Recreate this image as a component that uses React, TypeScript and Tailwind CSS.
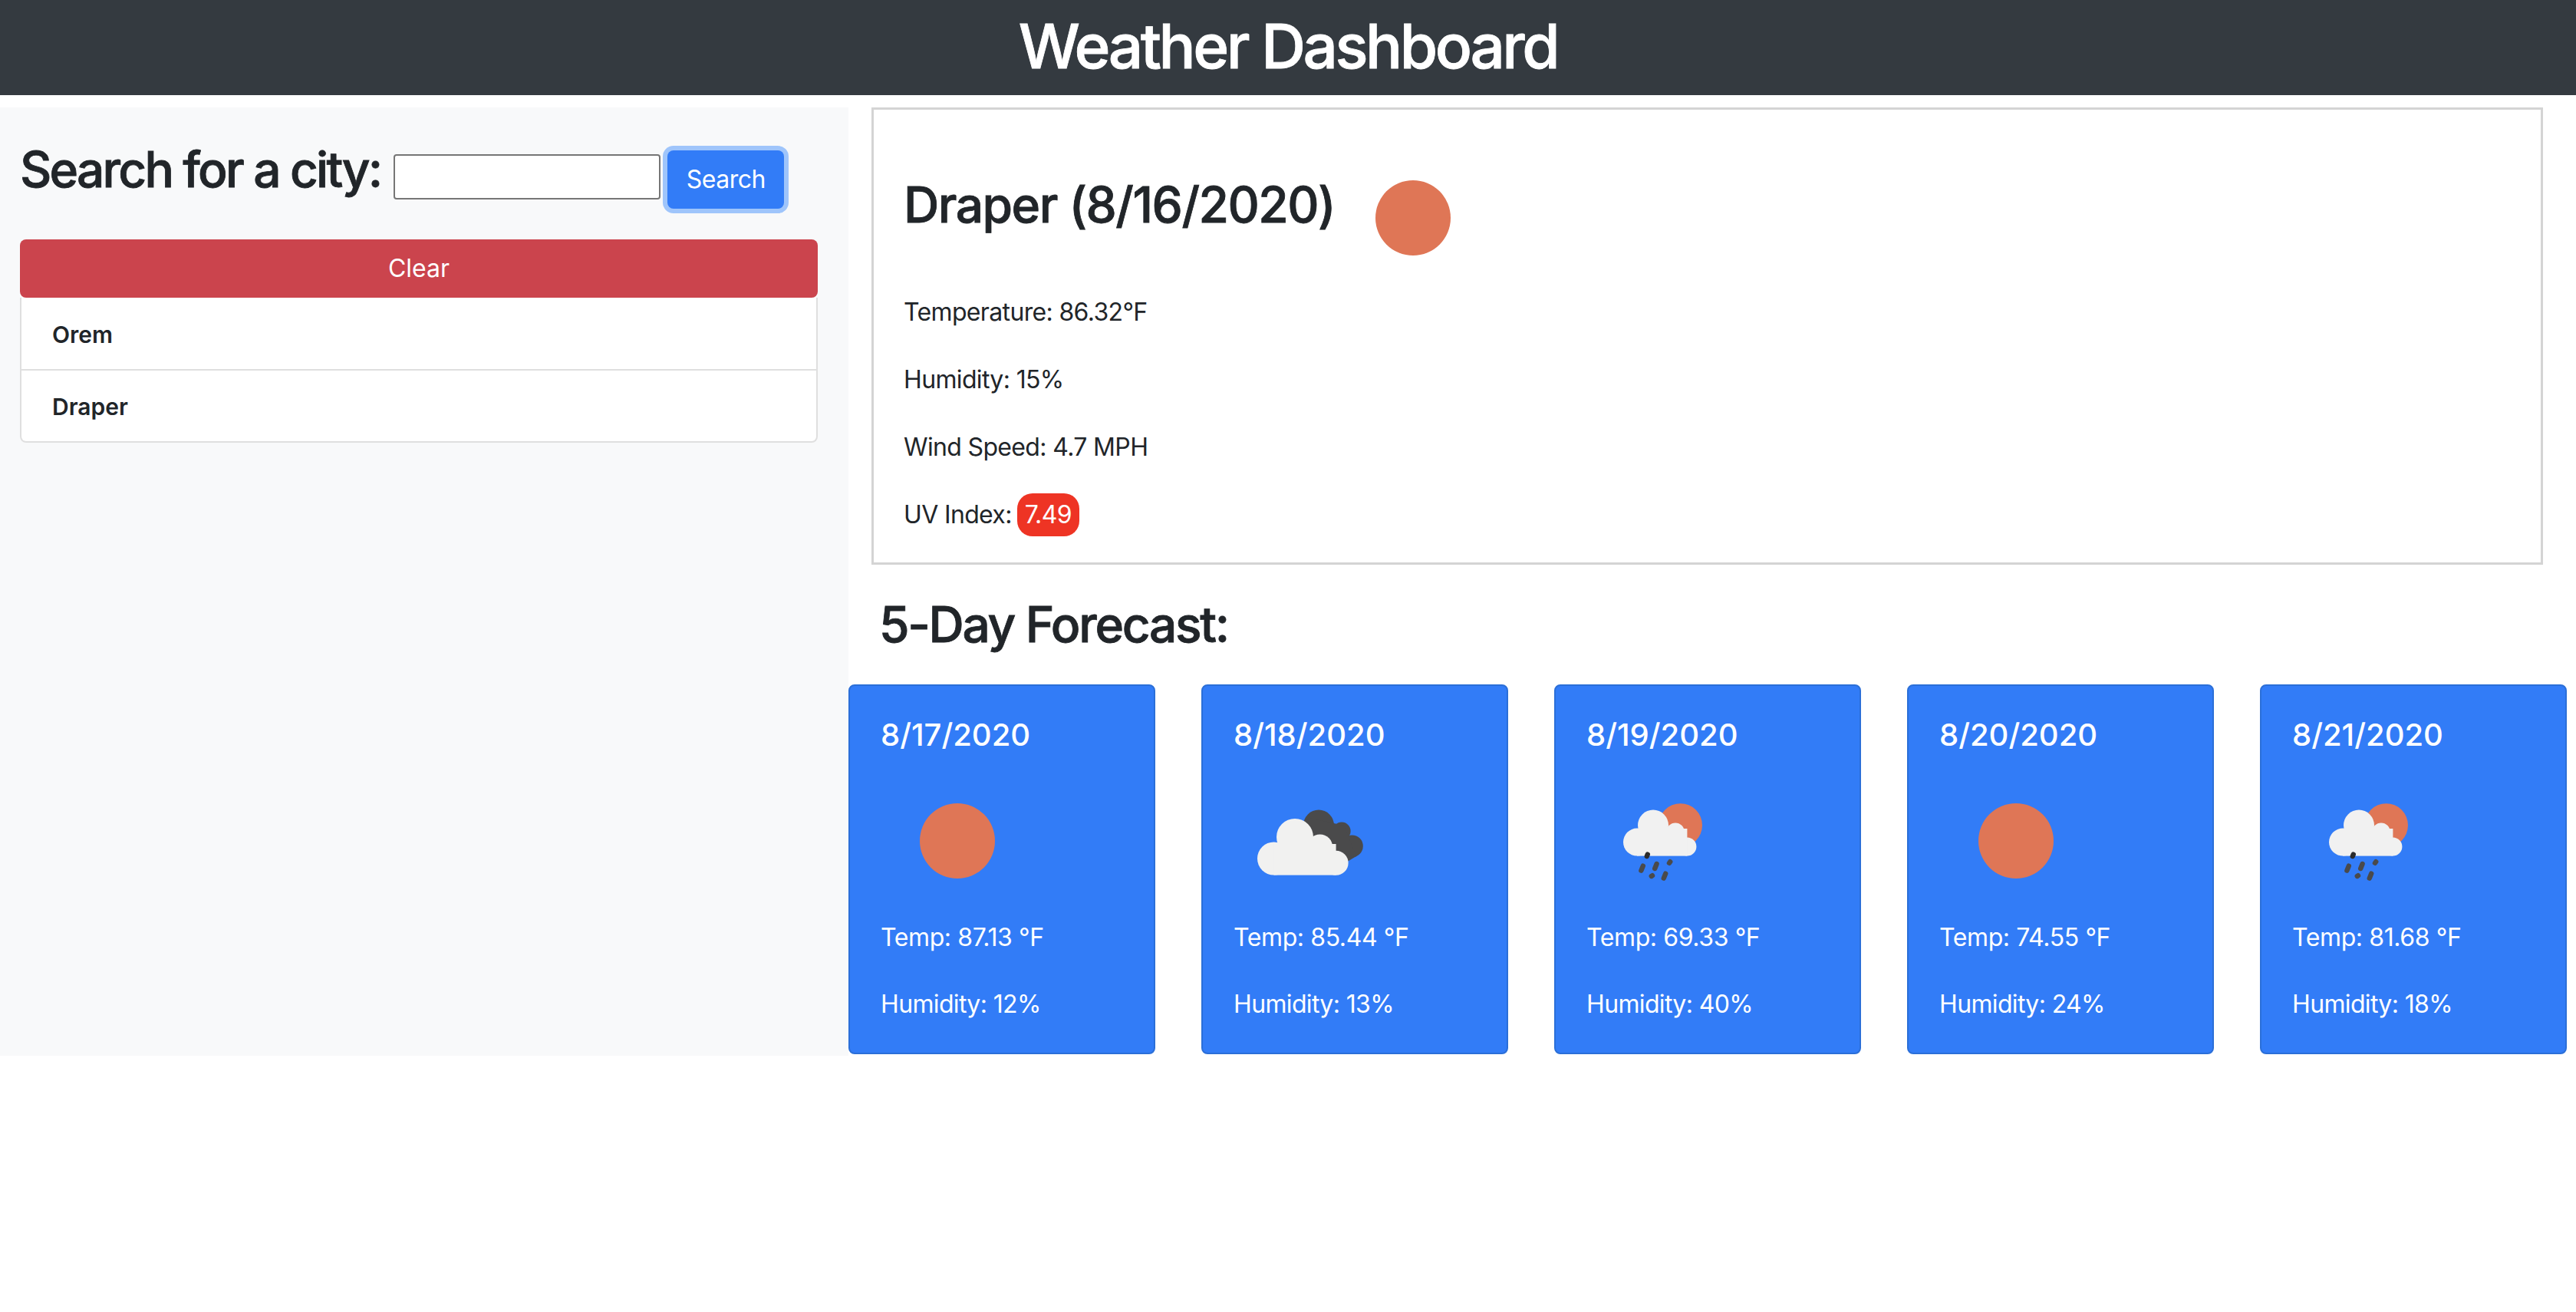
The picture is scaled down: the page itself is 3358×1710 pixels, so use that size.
import React from 'react';

type IconKind = 'sun' | 'clouds' | 'rain';

const FORECAST: { date: string; temp: string; humidity: string; icon: IconKind }[] = [
  { date: '8/17/2020', temp: '87.13', humidity: '12', icon: 'sun' },
  { date: '8/18/2020', temp: '85.44', humidity: '13', icon: 'clouds' },
  { date: '8/19/2020', temp: '69.33', humidity: '40', icon: 'rain' },
  { date: '8/20/2020', temp: '74.55', humidity: '24', icon: 'sun' },
  { date: '8/21/2020', temp: '81.68', humidity: '18', icon: 'rain' },
];

const WeatherIcon = ({ kind }: { kind: IconKind }) => {
  if (kind === 'sun') {
    return (
      <svg viewBox="0 0 100 100" className="w-[200px] h-[200px] block">
        <circle cx="50" cy="50" r="24.5" fill="#df7656" />
      </svg>
    );
  }

  if (kind === 'clouds') {
    return (
      <svg viewBox="0 0 100 100" className="w-[200px] h-[200px] block">
        <g fill="#4a4a4b">
          <circle cx="55.5" cy="39.8" r="10" />
          <circle cx="70.5" cy="43.6" r="5.8" />
          <circle cx="77.2" cy="53.4" r="7.2" />
          <path d="M50 35 L72 40 L80 60 L70 66 L50 50 Z" />
        </g>
        <g fill="#f1f1f0">
          <circle cx="40" cy="47.5" r="12" />
          <circle cx="26.3" cy="61.5" r="10.8" />
          <circle cx="66.8" cy="64.4" r="8" />
          <circle cx="56.3" cy="54" r="8.3" />
          <rect x="26.3" y="52" width="40.5" height="20.3" />
        </g>
      </svg>
    );
  }

  return (
    <svg viewBox="0 0 100 100" className="w-[200px] h-[200px] block">
      <circle cx="61.3" cy="39.8" r="14.2" fill="#df7656" />
      <g fill="#f1f1f1">
        <circle cx="43.5" cy="39.8" r="10" />
        <circle cx="33" cy="50.8" r="9" />
        <circle cx="65.7" cy="53.8" r="6" />
        <circle cx="58" cy="44" r="5.8" />
        <rect x="33" y="42" width="32.7" height="17.8" />
      </g>
      <g stroke="#4a4a4b" strokeWidth="3.2" strokeLinecap="round">
        <line x1="39.9" y1="58.8" x2="39.4" y2="60" stroke="#2b2b2b" />
        <line x1="36.9" y1="66.3" x2="35.7" y2="69.3" />
        <line x1="45.8" y1="65" x2="44.6" y2="68" />
        <line x1="54.6" y1="63.6" x2="54" y2="64.4" />
        <line x1="43" y1="72.6" x2="42.4" y2="73" />
        <line x1="51.6" y1="71.3" x2="50.4" y2="74.3" />
      </g>
    </svg>
  );
};

const ForecastCard = ({ date, temp, humidity, icon }: (typeof FORECAST)[number]) => (
  <div className="w-[400px] h-[482px] shrink-0 bg-[#327cf7] border-2 border-[#2b6fd8] rounded-lg pl-[40px] pt-[36px] text-white">
    <h5 className="text-[40px] leading-[56px] font-medium">{date}</h5>
    <div className="mt-[10px] mb-[2px]">
      <WeatherIcon kind={icon} />
    </div>
    <p className="text-[32px] leading-[48px] tracking-[-0.4px]">Temp: {temp} °F</p>
    <p className="text-[32px] leading-[48px] tracking-[-0.65px] mt-[39px]">Humidity: {humidity}%</p>
  </div>
);

export default function App() {
  return (
    <div className="font-['Inter','Liberation_Sans',sans-serif] text-[#212529] bg-white min-h-[1710px]">
      <header className="h-[124px] bg-[#343a40] flex items-center justify-center">
        <h1 className="text-[80px] leading-[116px] font-medium [-webkit-text-stroke:0.8px] tracking-[-3.45px] text-white mt-[-4px]">Weather Dashboard</h1>
      </header>

      <div className="flex mt-4">
        <aside className="w-[1106px] shrink-0 bg-[#f8f9fa] px-[26px] pt-[56px]">
          <div className="flex items-center h-[76px]">
            <h3 className="text-[64px] leading-[76px] font-medium [-webkit-text-stroke:0.8px] tracking-[-2.8px] mt-[-26px]">Search for a city:</h3>
            <input
              type="text"
              className="ml-[17px] mt-[-8px] w-[348px] h-[59px] bg-white border-2 border-[#767676] rounded-[4px]"
            />
            <button className="ml-[9px] w-[152px] h-[76px] bg-[#327cf7] rounded-lg text-white text-[32px] tracking-[-0.5px] ring-[6px] ring-[#9fc5fb]">
              Search
            </button>
          </div>

          <div className="w-[1040px] mt-[40px]">
            <button className="w-full h-[76px] bg-[#cb444d] rounded-lg text-white text-[32px]">Clear</button>
            <ul className="border-2 border-t-0 border-[#dfdfdf] rounded-b-lg bg-white">
              <li className="h-[95px] pl-[40px] pt-[4px] flex items-center text-[30px] font-semibold border-b-2 border-[#dfdfdf]">Orem</li>
              <li className="h-[92px] pl-[40px] pt-[2px] flex items-center text-[30px] font-semibold">Draper</li>
            </ul>
          </div>
        </aside>

        <main className="flex-1 min-w-0">
          <section className="ml-[30px] mr-[43px] h-[596px] border-[3px] border-[#d4d4d4] pl-[39px] pt-[80px]">
            <div className="flex items-start">
              <h2 className="text-[64px] leading-[88px] font-medium [-webkit-text-stroke:0.8px] tracking-[-1.5px]">Draper (8/16/2020)</h2>
              <svg viewBox="0 0 100 100" className="w-[200px] h-[200px] block ml-[2px] mt-[-39px] mb-[1px]">
                <circle cx="50" cy="50" r="24.5" fill="#df7656" />
              </svg>
            </div>
            <div className="text-[32px] leading-[48px] tracking-[-0.65px] mt-[-2px] flex flex-col gap-[40px]">
              <p>Temperature: 86.32°F</p>
              <p>Humidity: 15%</p>
              <p>Wind Speed: 4.7 MPH</p>
              <p className="flex items-center h-[48px]">
                UV Index:
                <span className="ml-[7px] h-[56px] w-[81px] flex items-center justify-center bg-[#ee3424] text-white rounded-[20px]">7.49</span>
              </p>
            </div>
          </section>

          <h2 className="text-[64px] leading-[76px] font-medium [-webkit-text-stroke:0.8px] tracking-[-2.3px] ml-[40px] mt-[40px] mb-[40px]">5-Day Forecast:</h2>

          <div className="flex gap-[60px] pb-[2px]">
            {FORECAST.map(day => (
              <ForecastCard key={day.date} {...day} />
            ))}
          </div>
        </main>
      </div>
    </div>
  );
}
